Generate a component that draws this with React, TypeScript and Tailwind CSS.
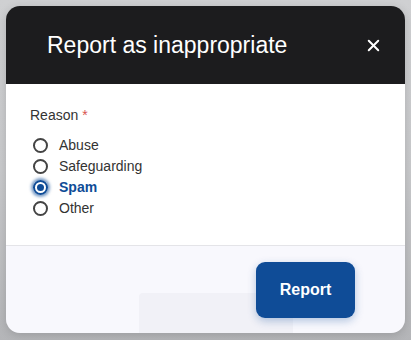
import { X } from "lucide-react";

const reasons = ["Abuse", "Safeguarding", "Spam", "Other"];

function Radio({ label, checked }: { label: string; checked?: boolean }) {
  return (
    <label className="flex h-[21px] items-center gap-[11px]">
      {checked ? (
        <span className="flex h-[15px] w-[15px] items-center justify-center rounded-full border-2 border-[#0f4c97] shadow-[0_0_3px_2px_rgba(15,76,151,0.55)]">
          <span className="h-[7px] w-[7px] rounded-full bg-[#0f4c97]" />
        </span>
      ) : (
        <span className="h-[15px] w-[15px] rounded-full border-2 border-[#444]" />
      )}
      <span
        className={
          checked
            ? "text-[14px] font-bold text-[#0f4c97]"
            : "text-[14px] text-[#333]"
        }
      >
        {label}
      </span>
    </label>
  );
}

export default function App() {
  return (
    <div
      className="relative h-[340px] w-[411px] overflow-hidden bg-gradient-to-b from-[#cfd0d2] via-[#c9cacc] to-[#b4b5b8] p-[6px]"
      style={{ fontFamily: '"Liberation Sans", Arial, sans-serif' }}
    >
      <div className="flex h-[327px] w-[399px] flex-col overflow-hidden rounded-[14px] shadow-[0_2px_10px_rgba(0,0,0,0.15)]">
        {/* header */}
        <div className="flex h-[78px] items-center justify-between bg-[#1c1c1e] pl-[41px] pr-[22px]">
          <h2 className="text-[23px] text-white">Report as inappropriate</h2>
          <X className="h-[19px] w-[19px] text-white" strokeWidth={2.5} />
        </div>

        {/* body */}
        <div className="h-[162px] border-b border-[#e4e4e8] bg-white px-[24px] pt-[21px]">
          <div className="text-[14px] text-[#333]">
            Reason <span className="text-[#d9534f]">*</span>
          </div>
          <div className="mt-[9px] flex flex-col pl-[3px]">
            {reasons.map((r) => (
              <Radio key={r} label={r} checked={r === "Spam"} />
            ))}
          </div>
        </div>

        {/* footer */}
        <div className="relative flex flex-1 justify-end bg-[#f8f8fd] pr-[50px] pt-[16px]">
          <div className="absolute left-[133px] top-[47px] h-[60px] w-[154px] rounded-[4px] bg-[#1c1c40]/[0.03]" />
          <button className="relative h-[56px] w-[99px] rounded-[9px] bg-[#0f4c97] text-[16px] font-bold text-white shadow-[0_3px_8px_rgba(15,76,151,0.3)]">
            Report
          </button>
        </div>
      </div>
    </div>
  );
}
